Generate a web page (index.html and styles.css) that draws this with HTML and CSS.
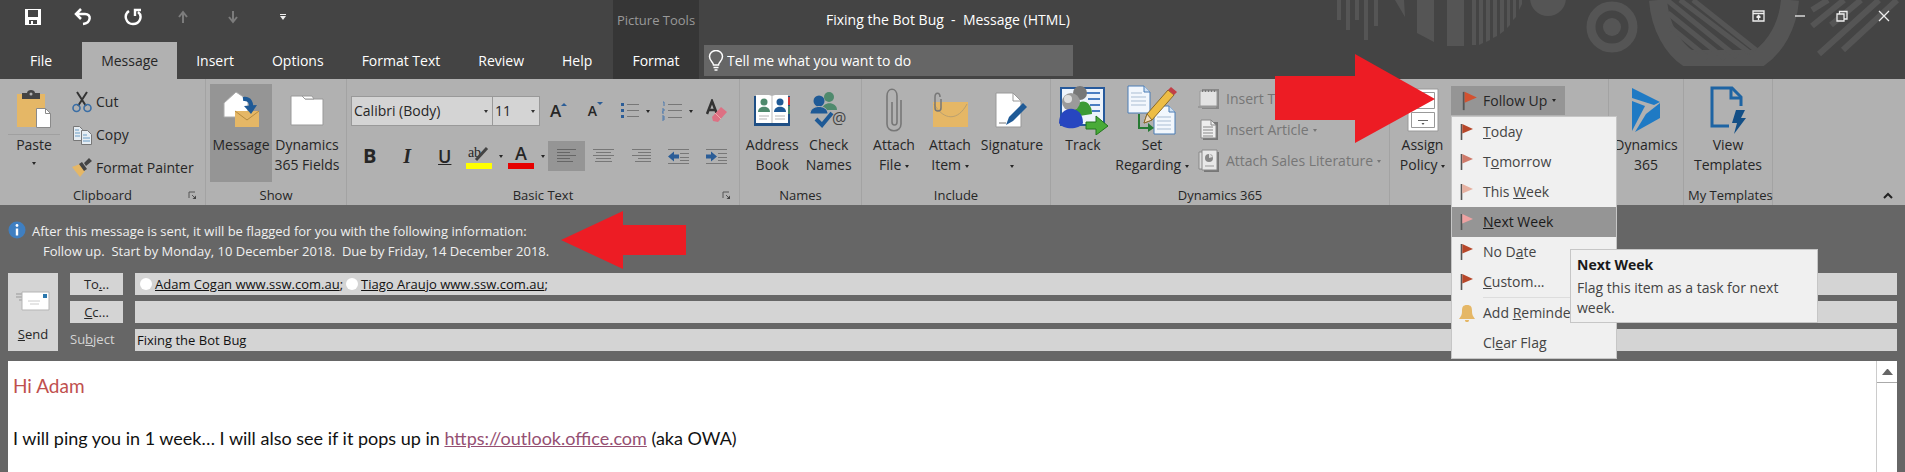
FILE: index.html
```
<!DOCTYPE html>
<html lang="en">
<head>
    <meta charset="UTF-8">
    <meta name="viewport" content="width=device-width, initial-scale=1.0">
    <title>Fixing the Bot Bug - Message (HTML)</title>
    <link rel="stylesheet" href="styles.css">
</head>
<body>
    <svg class="defs" width="0" height="0" aria-hidden="true">
        <symbol id="flag" viewBox="0 0 14 18">
            <path d="M1.5 1v16" stroke="#555" stroke-width="1.6" fill="none"/>
            <path d="M2.3 1L13 6 2.3 10.500z" fill="currentColor"/>
        </symbol>
        <symbol id="launcher" viewBox="0 0 10 10">
            <path d="M1 7V1h6M4 4l3 3" stroke="#555" fill="none"/>
            <path d="M8 4.500V8H4.500z" fill="#444"/>
        </symbol>
    </svg>

    <header class="titlebar">
        <svg class="titlebar-art" width="620" height="66" viewBox="1285 0 620 66" aria-hidden="true">
            <g fill="#555">
                <path d="M1337 0h4v20h-4zM1346 0h4v30h-4zM1355 0h4v20h-4zM1364 0h4v40h-4zM1374 0h4v26h-4z"/>
                <path d="M1395 0h9l1 17zM1417 0h17v42l-17-9zM1447 0h17v46h-17z"/>
                <path d="M1472 0h4v45h-4zM1479 0h4v43l-4 2zM1486 0h4v40l-4 2zM1493 0h4v36l-4 2zM1500 0h4v31l-4 3zM1507 0h3v25l-3 3zM1513 0h3v17l-3 3zM1519 0h3v4l-3 6z"/>
                <circle cx="1548" cy="-2" r="18"/>
                <circle cx="1612" cy="27" r="9"/>
            </g>
            <circle cx="1612" cy="27" r="21" fill="none" stroke="#555" stroke-width="9"/>
            <path d="M1658 0c2 27 15 49 31 59h69c18-12 30-34 32-59" fill="none" stroke="#555" stroke-width="18"/>
            <path d="M1681 58h85v6h-85z" fill="#555"/>
            <path d="M1667 0l70 57M1680 0l70 53M1693 0l63 50M1668 13l57 46M1670 27l38 31" stroke="#555" stroke-width="5"/>
            <path d="M1828 0l-16 10M1844 0l-32 26M1861 0l-30 25M1879 0l-60 54M1897 0l-54 50" stroke="#555" stroke-width="6"/>
        </svg>

        <div class="titlebar-left">
            <div class="quick-access">
                <button type="button" aria-label="Save">
                    <svg width="18" height="18" viewBox="0 0 18 18"><path d="M1 1h16v16H1z" fill="#fff"/><path d="M4 2h10v7H4zM5 12h8v4H5z" fill="#444"/><path d="M7 13h2v3H7z" fill="#fff"/></svg>
                </button>
                <button type="button" aria-label="Undo">
                    <svg width="18" height="18" viewBox="0 0 18 18" fill="none" stroke="#fff" stroke-width="2.500"><path d="M7 1L2 6l5 5M2 6h9c7 0 6 9-2 10"/></svg>
                </button>
                <button type="button" aria-label="Redo">
                    <svg width="18" height="18" viewBox="0 0 18 18" fill="none" stroke="#fff" stroke-width="2.400"><path d="M5 3C-1 7 2 16 9 16s10-8 5-12"/><path d="M11 8V2h6"/></svg>
                </button>
                <button type="button" aria-label="Previous item" disabled>
                    <svg width="12" height="14" viewBox="0 0 12 14" fill="none" stroke="#7c7c7c" stroke-width="2"><path d="M6 13V2M2 7l4-5 4 5"/></svg>
                </button>
                <button type="button" aria-label="Next item" disabled>
                    <svg width="12" height="14" viewBox="0 0 12 14" fill="none" stroke="#7c7c7c" stroke-width="2"><path d="M6 1v11M2 7l4 5 4-5"/></svg>
                </button>
                <button type="button" aria-label="Customize">
                    <svg width="6" height="6" viewBox="0 0 6 6" fill="#eee"><path d="M0 0h6v1H0zM0 2h6L3 6z"/></svg>
                </button>
            </div>
            <nav class="tabs">
                <button type="button" class="tab tab-file">File</button>
                <button type="button" class="tab active">Message</button>
                <button type="button" class="tab">Insert</button>
                <button type="button" class="tab">Options</button>
                <button type="button" class="tab">Format Text</button>
                <button type="button" class="tab">Review</button>
                <button type="button" class="tab">Help</button>
            </nav>
        </div>

        <div class="context-tab">
            <span class="context-name">Picture Tools</span>
            <button type="button" class="tab">Format</button>
        </div>

        <div class="titlebar-right">
            <div class="title-row">
                <h1>Fixing the Bot Bug&nbsp; -&nbsp; Message (HTML)</h1>
                <div class="window-buttons">
                    <button type="button" aria-label="Ribbon display options">
                        <svg width="13" height="12" viewBox="0 0 13 12" fill="none" stroke="#eee" stroke-width="1.300"><path d="M1 1h11v10H1zM1 3.500h11M6.500 10V5.500M4.500 7.500l2-2 2 2"/></svg>
                    </button>
                    <button type="button" aria-label="Minimize">
                        <svg width="12" height="12" viewBox="0 0 12 12" stroke="#eee" stroke-width="1.300"><path d="M1 6h10"/></svg>
                    </button>
                    <button type="button" aria-label="Restore">
                        <svg width="12" height="12" viewBox="0 0 12 12" fill="none" stroke="#eee" stroke-width="1.300"><path d="M1 4h7v7H1zM3.500 4V1.500H11V9H8"/></svg>
                    </button>
                    <button type="button" aria-label="Close">
                        <svg width="12" height="12" viewBox="0 0 12 12" stroke="#eee" stroke-width="1.300"><path d="M1 1l10 10M11 1L1 11"/></svg>
                    </button>
                </div>
            </div>
            <label class="tell-me">
                <svg width="16" height="21" viewBox="0 0 16 21" fill="none" stroke="#fff" stroke-width="1.500"><path d="M5.500 15c0-3-4-4-4-8.500a6.500 6 0 0 1 13 0c0 4.500-4 5.500-4 8.500zM5.500 17.500h5M6.500 20h3"/></svg>
                <input type="text" placeholder="Tell me what you want to do">
            </label>
        </div>
    </header>

    <section class="ribbon">
        <div class="group group-clipboard">
            <div class="group-body">
                <button type="button" class="big paste">
                    <span class="icon">
                        <svg width="36" height="38" viewBox="0 0 36 38"><path d="M1 4h28v33H1z" fill="#e5b766"/><path d="M6 3h5c0-4 8-4 8 0h5v6H6z" fill="#444"/><circle cx="15" cy="4" r="1.500" fill="#b1b1b1"/><path d="M20.500 18.500h9l5 5v14h-14z" fill="#fff" stroke="#8a8a8a"/><path d="M29.500 18.500v5h5" fill="none" stroke="#8a8a8a"/></svg>
                    </span>
                    <span>Paste</span>
                    <span class="caret"></span>
                </button>
                <div class="stack">
                    <button type="button" class="small">
                        <svg width="20" height="22" viewBox="0 0 20 22" fill="none"><path d="M5 1l9 14M15 1L6 15" stroke="#333" stroke-width="2"/><circle cx="4.500" cy="17" r="3.500" stroke="#3a6ea5" stroke-width="1.600"/><circle cx="15.500" cy="17" r="3.500" stroke="#3a6ea5" stroke-width="1.600"/></svg>
                        Cut
                    </button>
                    <button type="button" class="small">
                        <svg width="20" height="22" viewBox="0 0 20 22" fill="#e6edf3" stroke="#777"><path d="M1.500 2.500h6l3 3v11h-9z"/><path d="M9.500 6.500h6l4 4v10h-10z"/><path d="M3 6h4M3 9h5M3 12h5M11 11h4M11 14h7M11 17h7" stroke="#6b9cc4"/></svg>
                        Copy
                    </button>
                    <button type="button" class="small">
                        <svg width="20" height="20" viewBox="0 0 20 20"><path d="M0 9l8-3 5 7-5 6z" fill="#e5b766"/><path d="M7 6l3-2 5 7-3 2zM12 5l5-5 3 3-6 5z" fill="#444"/></svg>
                        Format Painter
                    </button>
                </div>
            </div>
            <div class="group-label">Clipboard <svg class="launcher"><use href="#launcher"/></svg></div>
        </div>

        <div class="group group-show">
            <div class="group-body">
                <button type="button" class="big message-view pressed">
                    <span class="icon">
                        <svg width="36" height="38" viewBox="0 0 36 38"><path d="M1 12L13 1l12 8v17H1z" fill="#fff" stroke="#aaa"/><path d="M12 20h24v16H12z" fill="#e5b766"/><path d="M12 20l12 9 12-9" fill="none" stroke="#b48a40"/><path d="M20 8c7-1 9 4 8 12" fill="none" stroke="#1f5a96" stroke-width="4"/><path d="M21 15l7 8 6-9z" fill="#1f5a96"/></svg>
                    </span>
                    <span>Message</span>
                </button>
                <button type="button" class="big">
                    <span class="icon">
                        <svg width="34" height="32" viewBox="0 0 34 32"><path d="M1 2h11l3 3h18v26H1z" fill="#fff" stroke="#999"/><path d="M12 2h10l2 3h-9z" fill="#fff" stroke="#999"/></svg>
                    </span>
                    <span>Dynamics<br>365 Fields</span>
                </button>
            </div>
            <div class="group-label">Show</div>
        </div>

        <div class="group group-text">
            <div class="group-body rows">
                <div class="row">
                    <span class="combo combo-font"><select aria-label="Font"><option>Calibri (Body)</option></select></span>
                    <span class="combo combo-size"><select aria-label="Font size"><option>11</option></select></span>
                    <button type="button" class="tool" aria-label="Grow font"><span class="grow">A</span><svg width="6" height="18" viewBox="0 0 6 18"><path d="M0 4l3-3 3 3z" fill="#2b5d97"/></svg></button>
                    <button type="button" class="tool" aria-label="Shrink font"><span class="shrink">A</span><svg width="6" height="18" viewBox="0 0 6 18"><path d="M0 0h6L3 3z" fill="#2b5d97"/></svg></button>
                    <button type="button" class="tool wide" aria-label="Bullets">
                        <svg width="18" height="16" viewBox="0 0 18 16"><path d="M0 0h3v3H0zM0 6h3v3H0zM0 12h3v3H0z" fill="#2b5d97"/><path d="M6 1.500h12M6 7.500h12M6 13.500h12" stroke="#777"/></svg><span class="caret"></span>
                    </button>
                    <button type="button" class="tool wide" aria-label="Numbering">
                        <svg width="20" height="20" viewBox="0 0 20 20"><path d="M1 1h1v4M0 8h2v2H0v2h2M0 15h2v4H0M0 17h2" stroke="#4a78ad" fill="none"/><path d="M6 3.500h14M6 9.500h14M6 16.500h14" stroke="#777"/></svg><span class="caret"></span>
                    </button>
                    <button type="button" class="tool" aria-label="Clear formatting"><svg width="22" height="24" viewBox="0 0 22 24"><path d="M1 15L6 2l5 13M3 11h6" fill="none" stroke="#333" stroke-width="2.500"/><path d="M6 18l9-10 6 5-9 10-5-1z" fill="#dd7083"/><path d="M9 14l6 6" stroke="#eaa"/></svg></button>
                </div>
                <div class="row">
                    <button type="button" class="tool bold">B</button>
                    <button type="button" class="tool italic">I</button>
                    <button type="button" class="tool underline">U</button>
                    <button type="button" class="tool wide" aria-label="Highlight">
                        <span class="swatch-tool yellow">ab<svg width="16" height="16" viewBox="0 0 16 16"><path d="M2 14L13 2" stroke="#444" stroke-width="3"/></svg></span><span class="caret"></span>
                    </button>
                    <button type="button" class="tool wide" aria-label="Font color"><span class="swatch-tool red">A</span><span class="caret"></span></button>
                    <button type="button" class="tool pressed" aria-label="Align left"><svg width="19" height="16" viewBox="0 0 19 16"><path d="M0 1.500h19M0 4.500h13M0 7.500h19M0 10.500h13M0 13.500h16" stroke="#666"/></svg></button>
                    <button type="button" class="tool" aria-label="Center"><svg width="21" height="16" viewBox="0 0 21 16"><path d="M0 1.500h21M3 4.500h15M0 7.500h21M3 10.500h15M2 13.500h17" stroke="#777"/></svg></button>
                    <button type="button" class="tool" aria-label="Align right"><svg width="19" height="16" viewBox="0 0 19 16"><path d="M0 1.500h19M6 4.500h13M0 7.500h19M6 10.500h13M3 13.500h16" stroke="#777"/></svg></button>
                    <button type="button" class="tool" aria-label="Decrease indent"><svg width="21" height="17" viewBox="0 0 21 17"><path d="M0 1.500h21M12 5.500h9M12 9.500h9M12 12.500h9M0 15.500h21" stroke="#777"/><path d="M0 8.500l6-5v3h5v4H6v3z" fill="#2b5d97"/></svg></button>
                    <button type="button" class="tool" aria-label="Increase indent"><svg width="21" height="17" viewBox="0 0 21 17"><path d="M0 1.500h21M12 5.500h9M12 9.500h9M12 12.500h9M0 15.500h21" stroke="#777"/><path d="M11 8.500l-6-5v3H0v4h5v3z" fill="#2b5d97"/></svg></button>
                </div>
            </div>
            <div class="group-label">Basic Text <svg class="launcher"><use href="#launcher"/></svg></div>
        </div>

        <div class="group group-names">
            <div class="group-body">
                <button type="button" class="big">
                    <span class="icon">
                        <svg width="38" height="34" viewBox="0 0 38 34"><path d="M1 3h36v30H1z" fill="#1f4f85"/><path d="M35 4h2v8h-2z" fill="#d23b3b"/><path d="M35 13h2v8h-2z" fill="#4f8a6d"/><path d="M3 2h13l3 1 3-1h13v28H3z" fill="#fff"/><path d="M19 3v27" stroke="#bbb"/><path d="M6 23h10M6 26h8M22 23h10M22 26h10" stroke="#b5b5b5"/><circle cx="11" cy="9" r="3.500" fill="#4f8a6d"/><path d="M5 19c0-7 12-7 12 0z" fill="#4f8a6d"/><circle cx="27" cy="9" r="3.500" fill="#1f5a96"/><path d="M21 19c0-7 12-7 12 0z" fill="#1f5a96"/></svg>
                    </span>
                    <span>Address<br>Book</span>
                </button>
                <button type="button" class="big">
                    <span class="icon">
                        <svg width="40" height="42" viewBox="0 0 40 42"><circle cx="20" cy="8" r="5" fill="#4f8a6d"/><path d="M13 21c0-9 15-9 15 0z" fill="#4f8a6d"/><circle cx="10" cy="12" r="5.500" fill="#1f5a96"/><path d="M1 25c0-10 18-10 18 0z" fill="#1f5a96" stroke="#b1b1b1"/><path d="M7 30l6 6 10-12" fill="none" stroke="#1f5a96" stroke-width="4"/><text x="23" y="35" class="at">@</text></svg>
                    </span>
                    <span>Check<br>Names</span>
                </button>
            </div>
            <div class="group-label">Names</div>
        </div>

        <div class="group group-include">
            <div class="group-body">
                <button type="button" class="big">
                    <span class="icon">
                        <svg width="16" height="44" viewBox="0 0 16 44" fill="none" stroke="#777" stroke-width="1.600"><path d="M15 12v24c0 9-14 9-14 0V8c0-9 10-9 10 0v26c0 4-5 4-5 0V14"/></svg>
                    </span>
                    <span>Attach<br>File <i class="caret"></i></span>
                </button>
                <button type="button" class="big">
                    <span class="icon">
                        <svg width="36" height="36" viewBox="0 0 36 36"><path d="M1 10h35v25H1z" fill="#e5b766"/><path d="M2 12c10 17 24 17 33 0" fill="none" stroke="#b9a070"/><path d="M9 7v9c0 4-6 4-6 0V5c0-5 5-5 5 0" fill="none" stroke="#777" stroke-width="1.500"/></svg>
                    </span>
                    <span>Attach<br>Item <i class="caret"></i></span>
                </button>
                <button type="button" class="big signature">
                    <span class="icon">
                        <svg width="34" height="36" viewBox="0 0 34 36"><path d="M1 1h17l8 8v26H1z" fill="#fff" stroke="#999"/><path d="M18 1v8h8" fill="none" stroke="#999"/><path d="M11 33l3-8 14-14 4 4-14 14z" fill="#1f5a96"/><path d="M4 31h7" stroke="#777"/></svg>
                    </span>
                    <span>Signature<br><i class="caret"></i></span>
                </button>
            </div>
            <div class="group-label">Include</div>
        </div>

        <div class="group group-dynamics">
            <div class="group-body">
                <button type="button" class="big">
                    <span class="icon">
                        <svg width="50" height="50" viewBox="0 0 50 50"><path d="M3 3h43v37H3z" fill="#eef4fc" stroke="#26599b" stroke-width="2"/><path d="M28 8h14M30 14h12M32 20h10M34 26h8" stroke="#4b7ec2" stroke-width="2"/><circle cx="22" cy="8" r="7" fill="#777"/><path d="M15 32c0-20 19-20 19-3z" fill="#3c9a35"/><circle cx="13" cy="17" r="9" fill="#9a9a9a"/><circle cx="10" cy="14" r="4" fill="#ddd"/><path d="M1 38c0-19 24-19 24 0-4 7-20 7-24 0z" fill="#2746c0"/><path d="M28 37h10v-6l12 10-12 9v-6H28z" fill="#49ab38" stroke="#23751e"/></svg>
                    </span>
                    <span>Track</span>
                </button>
                <button type="button" class="big regarding">
                    <span class="icon">
                        <svg width="50" height="50" viewBox="0 0 50 50"><path d="M1 1h16l6 6v21H1z" fill="#f2f7fd" stroke="#4a7db5"/><path d="M17 1v6h6" fill="#cfe0f2" stroke="#4a7db5"/><path d="M4 8h11M4 12h15M4 16h15M4 20h15" stroke="#a9bdd3"/><path d="M27 21h15l6 6v22H27z" fill="#f2f7fd" stroke="#4a7db5"/><path d="M42 21v6h6" fill="#cfe0f2" stroke="#4a7db5"/><path d="M30 32h14M30 36h14M30 40h14M30 44h14" stroke="#a9bdd3"/><path d="M12 29v14h10" fill="none" stroke="#267a33" stroke-width="2"/><path d="M21 38l6 5-6 4z" fill="#267a33"/><path d="M17 38l3-9L41 5l6 5-22 25z" fill="#edbd45" stroke="#8a6a2a"/><path d="M41 5l3-3 6 5-3 3z" fill="#c23f47"/><path d="M17 38l3-9 5 6z" fill="#f0dcc0" stroke="#8a6a2a"/></svg>
                    </span>
                    <span>Set<br>Regarding <i class="caret"></i></span>
                </button>
                <div class="stack inserts">
                    <button type="button" class="small" disabled>
                        <svg width="24" height="24" viewBox="0 0 24 24"><path d="M4 2h17v20H4z" fill="#888"/><path d="M2 4h17v15H2z" fill="#e3e3e3" stroke="#999"/><path d="M0 19h18v2H0z" fill="#999"/><path d="M4 4h13" stroke="#777" stroke-width="2" stroke-dasharray="1 2"/></svg>
                        Insert Template
                    </button>
                    <button type="button" class="small" disabled>
                        <svg width="24" height="22" viewBox="0 0 24 22"><path d="M5 3h15v18H5z" fill="#777"/><path d="M3 1h10l5 5v13H3z" fill="#eee" stroke="#888"/><path d="M13 1v5h5M5 8h10M5 11h10M5 14h10M5 17h10" fill="none" stroke="#888"/></svg>
                        Insert Article <i class="caret"></i>
                    </button>
                    <button type="button" class="small" disabled>
                        <svg width="24" height="24" viewBox="0 0 24 24"><path d="M1 3h12v17H1z" fill="#ddd" stroke="#888"/><path d="M6 3h15v20H6z" fill="#777"/><path d="M4 1h15v20H4z" fill="#e8e8e8" stroke="#888"/><circle cx="11" cy="9" r="4" fill="#888"/><path d="M11 9V4l4 4z" fill="#ddd"/><path d="M7 17h9" stroke="#999"/></svg>
                        Attach Sales Literature <i class="caret"></i>
                    </button>
                </div>
            </div>
            <div class="group-label">Dynamics 365</div>
        </div>

        <div class="group group-tags">
            <div class="group-body">
                <button type="button" class="big">
                    <span class="icon">
                        <svg width="32" height="44" viewBox="0 0 32 44" fill="#fff" stroke="#999"><path d="M1 1h30v42H1z"/><path d="M4.500 4.500h23v16h-23zM4.500 24.500h23v15h-23z"/><path d="M11 32.500h10" stroke="#666"/><path d="M14.500 35h3L16 37z" fill="#555" stroke="none"/></svg>
                    </span>
                    <span>Assign<br>Policy <i class="caret"></i></span>
                </button>
                <div class="follow-up">
                    <button type="button" class="follow-up-button" aria-expanded="true">
                        <svg class="flag red-flag"><use href="#flag"/></svg>
                        Follow Up <i class="caret"></i>
                    </button>
                    <div class="menu">
                        <button type="button" class="menu-item"><svg class="flag"><use href="#flag"/></svg><span><u>T</u>oday</span></button>
                        <button type="button" class="menu-item"><svg class="flag mid"><use href="#flag"/></svg><span>T<u>o</u>morrow</span></button>
                        <button type="button" class="menu-item"><svg class="flag pale"><use href="#flag"/></svg><span>This <u>W</u>eek</span></button>
                        <button type="button" class="menu-item selected"><svg class="flag rose"><use href="#flag"/></svg><span><u>N</u>ext Week</span></button>
                        <button type="button" class="menu-item"><svg class="flag"><use href="#flag"/></svg><span>No D<u>a</u>te</span></button>
                        <button type="button" class="menu-item"><svg class="flag"><use href="#flag"/></svg><span><u>C</u>ustom...</span></button>
                        <hr>
                        <button type="button" class="menu-item">
                            <svg width="16" height="17" viewBox="0 0 16 17" fill="#e5b766"><path d="M8 0c4 0 5 2 5 6 0 4 1 5 3 8H0c2-3 3-4 3-8 0-4 1-6 5-6zM6 15h4c0 3-4 3-4 0z"/></svg>
                            <span>Add <u>R</u>eminder...</span>
                        </button>
                        <button type="button" class="menu-item no-icon"><span>Cl<u>e</u>ar Flag</span></button>
                        <div class="tooltip" role="tooltip">
                            <strong>Next Week</strong>
                            <p>Flag this item as a task for next week.</p>
                        </div>
                    </div>
                </div>
            </div>
        </div>

        <div class="group group-365">
            <div class="group-body">
                <button type="button" class="big">
                    <span class="icon">
                        <svg width="30" height="46" viewBox="0 0 30 46" fill="#1f7ac4"><path d="M1 1l28 14-6 3L1 11z"/><path d="M29 16v15L4 45l11-18z"/><path d="M1 14l13 5L1 44z"/></svg>
                    </span>
                    <span>Dynamics<br>365</span>
                </button>
            </div>
        </div>

        <div class="group group-templates">
            <div class="group-body">
                <button type="button" class="big">
                    <span class="icon">
                        <svg width="38" height="50" viewBox="0 0 38 50" fill="none" stroke="#1e64a3" stroke-width="3"><path d="M20 41H3V3h20l9 9v9"/><path d="M22 3v10h10"/><path d="M27 25h9l-4 8h5L25 49l3-11h-5z" fill="#134f86" stroke="none"/></svg>
                    </span>
                    <span>View<br>Templates</span>
                </button>
            </div>
            <div class="group-label">My Templates</div>
        </div>

        <button type="button" class="collapse" aria-label="Collapse the ribbon">
            <svg width="10" height="7" viewBox="0 0 10 7" fill="none" stroke="#222" stroke-width="2"><path d="M1 6l4-4 4 4"/></svg>
        </button>

        <svg class="pointer-right" width="160" height="90" viewBox="0 0 160 90" aria-hidden="true"><path d="M0 22h80V0l80 45-80 44V66H0z" fill="#ed1c24"/></svg>
    </section>

    <main class="compose">
        <div class="info-bar">
            <svg class="info-icon" width="18" height="18" viewBox="0 0 18 18"><circle cx="9" cy="9" r="8.500" fill="#3f7fc1"/><circle cx="9" cy="4.500" r="1.400" fill="#fff"/><path d="M9 7.500v7" stroke="#fff" stroke-width="2.400"/></svg>
            <p>After this message is sent, it will be flagged for you with the following information:<br>
                <span class="detail">Follow up.&nbsp; Start by Monday, 10 December 2018.&nbsp; Due by Friday, 14 December 2018.</span></p>
            <svg class="pointer-left" width="125" height="60" viewBox="0 0 125 60" aria-hidden="true"><path d="M0 30L62 1v14h63v30H62v14z" fill="#ed1c24"/></svg>
        </div>

        <form class="envelope">
            <button type="button" class="send">
                <svg width="34" height="20" viewBox="0 0 34 20"><path d="M0 3h10M0 6h9M3 9h6" stroke="#999"/><path d="M6 1h27v18H6z" fill="#fff" stroke="#b5b5b5"/><path d="M27 3h4v4h-4z" fill="#2b78ae"/><path d="M12 10h12M14 13h9" stroke="#ccc"/></svg>
                <span><u>S</u>end</span>
            </button>
            <button type="button" class="address-button">To<u>.</u>..</button>
            <div class="field recipients">
                <span class="presence"></span><span class="name">Adam Cogan www.ssw.com.au</span>;
                <span class="presence"></span><span class="name">Tiago Araujo www.ssw.com.au</span>;
            </div>
            <button type="button" class="address-button"><u>C</u>c...</button>
            <input type="text" class="field" aria-label="Cc">
            <label for="subject">Su<u>b</u>ject</label>
            <input type="text" class="field" id="subject" value="Fixing the Bot Bug">
        </form>

        <div class="message">
            <article>
                <p class="greeting">Hi Adam</p>
                <p>I will ping you in 1 week… I will also see if it pops up in <a href="https://outlook.office.com">https://outlook.office.com</a> (aka OWA)</p>
            </article>
            <div class="scrollbar">
                <button type="button" aria-label="Scroll up"><svg width="11" height="6" viewBox="0 0 11 6"><path d="M0 6l5-6h1l5 6z" fill="#666"/></svg></button>
            </div>
        </div>
    </main>
</body>
</html>
```
FILE: styles.css
```
* {
    box-sizing: border-box;
}

body {
    margin: 0;
    height: 100vh;
    display: flex;
    flex-direction: column;
    overflow: hidden;
    background-color: #666;
    color: #262626;
    font-family: "Open Sans", "Noto Sans", sans-serif;
    font-size: 14px;
    line-height: 20px;
}

button, input, select {
    font: inherit;
    color: inherit;
    border: none;
    border-radius: 0;
    background: none;
    padding: 0;
    margin: 0;
}

svg {
    flex: none;
}

p, h1 {
    margin: 0;
}

.defs {
    position: absolute;
}

.caret {
    display: inline-block;
    border: 2px solid transparent;
    border-top: 3px solid currentColor;
    border-bottom: none;
    vertical-align: middle;
}

/* title bar */
.titlebar {
    position: relative;
    display: flex;
    height: 79px;
    background-color: #444;
    color: #fff;
}

.titlebar-art {
    position: absolute;
    top: 0;
    right: 0;
}

.titlebar-left {
    width: 613px;
}

.quick-access {
    display: flex;
    height: 42px;
    padding: 0 0 8px 8px;
}

.quick-access button {
    width: 50px;
    display: flex;
    align-items: center;
    justify-content: center;
}

.tabs {
    display: flex;
}

.tab {
    height: 37px;
    padding: 0 19px;
    color: #fff;
}

.tab-file {
    padding: 0 30px;
}

.tab.active {
    background-color: #b1b1b1;
    color: #262626;
}

.context-tab {
    width: 86px;
    display: flex;
    flex-direction: column;
    align-items: center;
    background-color: #363636;
}

.context-name {
    height: 42px;
    padding-top: 10px;
    font-size: 13px;
    color: #999;
    white-space: nowrap;
}

.titlebar-right {
    position: relative;
    flex: 1;
}

.title-row {
    display: flex;
    justify-content: space-between;
    height: 45px;
    padding-left: 127px;
}

.title-row h1 {
    padding-top: 10px;
    font-size: 14px;
    font-weight: normal;
}

.window-buttons {
    display: flex;
    height: 31px;
}

.window-buttons button {
    width: 42px;
    display: flex;
    align-items: center;
    justify-content: center;
}

.tell-me {
    display: flex;
    align-items: center;
    gap: 3px;
    width: 369px;
    height: 31px;
    margin-left: 5px;
    padding-left: 4px;
    background-color: #666;
}

.tell-me input {
    flex: 1;
    outline: none;
}

.tell-me input::placeholder {
    color: #fff;
    opacity: 1;
}

/* ribbon */
.ribbon {
    position: relative;
    z-index: 1;
    display: flex;
    height: 126px;
    background-color: #b1b1b1;
}

.group {
    display: flex;
    flex-direction: column;
    flex: none;
    padding: 5px 4px 0;
    border-right: 1px solid #a3a3a3;
}

.group-clipboard { width: 206px; }
.group-show { width: 141px; }
.group-text { width: 393px; }
.group-names { width: 122px; }
.group-include { width: 189px; }
.group-dynamics { width: 339px; }
.group-tags { width: 219px; }
.group-365 { width: 75px; }
.group-templates { width: 89px; }

.group-body {
    display: flex;
    height: 98px;
}

.group-label {
    position: relative;
    padding-top: 4px;
    font-size: 13px;
    line-height: 18px;
    text-align: center;
    white-space: nowrap;
}

.launcher {
    position: absolute;
    right: 3px;
    bottom: 3px;
    width: 10px;
    height: 10px;
}

.big {
    display: flex;
    flex-direction: column;
    align-items: center;
    flex: 1;
    min-width: 0;
    white-space: nowrap;
}

.icon {
    display: flex;
    align-items: center;
    justify-content: center;
    height: 51px;
    flex: none;
}

.pressed {
    background-color: #959595;
}

.big.paste {
    flex: none;
    width: 60px;
}

.paste .icon {
    width: 52px;
    border-bottom: 1px solid #a0a0a0;
}

.paste .caret {
    margin-top: 7px;
}

.big.message-view {
    flex: none;
    width: 62px;
}

.stack {
    display: flex;
    flex-direction: column;
    justify-content: space-between;
    padding: 6px 0 2px 8px;
}

.small {
    display: flex;
    align-items: center;
    gap: 4px;
    height: 24px;
    white-space: nowrap;
}

.small:disabled {
    color: #767676;
}

.group-include .big {
    flex: none;
    width: 56px;
}

.group-include .signature {
    width: 68px;
}

.group-dynamics .big {
    flex: none;
    width: 56px;
}

.group-dynamics .regarding {
    width: 82px;
}

.inserts {
    padding: 3px 0 9px 5px;
}

.at {
    font-size: 16px;
    fill: #444;
}

/* basic text tools */
.rows {
    flex-direction: column;
    padding: 12px 0 11px;
    justify-content: space-between;
}

.row {
    display: flex;
    height: 30px;
}

.combo {
    position: relative;
    display: flex;
    border: 1px solid #999;
    background-color: #d4d4d4;
}

.combo::after {
    content: "";
    position: absolute;
    top: 13px;
    right: 4px;
    border: 2px solid transparent;
    border-top: 3px solid #333;
    border-bottom: none;
}

.combo select {
    flex: 1;
    appearance: none;
    padding-left: 2px;
}

.combo-font {
    width: 142px;
}

.combo-size {
    width: 47px;
    border-left: none;
}

.tool {
    display: flex;
    align-items: center;
    justify-content: center;
    flex: 1;
}

.tool.wide {
    flex: none;
    width: 42px;
    gap: 7px;
}

.grow {
    font-size: 17px;
    font-weight: 600;
}

.shrink {
    font-size: 14px;
    font-weight: 600;
}

.bold {
    font-size: 20px;
    font-weight: bold;
}

.italic {
    font-family: "Liberation Serif", serif;
    font-size: 20px;
    font-style: italic;
    font-weight: bold;
}

.underline {
    font-size: 18px;
    font-weight: 600;
    text-decoration: underline;
    text-decoration-thickness: 1px;
}

.swatch-tool {
    display: flex;
    justify-content: center;
    width: 26px;
    height: 26px;
    border-bottom: 6px solid;
}

.swatch-tool.yellow {
    border-color: #ff0;
    font-family: "Liberation Serif", serif;
}

.swatch-tool.yellow svg {
    margin: 3px 0 0 -7px;
}

.swatch-tool.red {
    border-color: #e60000;
    font-size: 18px;
    font-weight: 600;
}

/* follow up menu */
.group-tags .big {
    flex: none;
    width: 57px;
}

.follow-up {
    position: relative;
    padding-top: 2px;
}

.follow-up-button {
    display: flex;
    align-items: center;
    gap: 5px;
    width: 114px;
    height: 29px;
    padding-left: 11px;
    background-color: #959595;
    white-space: nowrap;
}

.flag {
    width: 16px;
    height: 18px;
    color: #b7472a;
}

.flag.red-flag {
    height: 22px;
    color: #d35230;
}

.flag.mid { color: #cf7a6a; }
.flag.pale { color: #e6b0a0; }
.flag.rose { color: #eea2a2; }

.menu {
    position: absolute;
    top: 32px;
    left: 0;
    width: 166px;
    border: 1px solid #c6c6c6;
    background-color: #f0f0f0;
    color: #444;
}

.menu-item {
    display: flex;
    align-items: center;
    gap: 8px;
    width: 100%;
    height: 30px;
    padding-left: 7px;
    white-space: nowrap;
}

.menu-item.no-icon {
    padding-left: 31px;
}

.menu-item.selected {
    background-color: #959595;
    color: #1a1a1a;
}

.menu hr {
    height: 1px;
    margin: 0 0 0 31px;
    border: none;
    background-color: #ddd;
}

.tooltip {
    position: absolute;
    top: 132px;
    left: 118px;
    width: 248px;
    padding: 5px 6px 4px;
    border: 1px solid #c6c6c6;
    background-color: #f0f0f0;
    color: #444;
}

.tooltip strong {
    color: #1a1a1a;
}

.tooltip p {
    margin-top: 3px;
}

.collapse {
    margin-left: auto;
    align-self: flex-end;
    height: 22px;
    padding: 0 12px;
}

.pointer-right {
    position: absolute;
    top: -25px;
    left: 1275px;
}

/* compose area */
.compose {
    flex: 1;
    display: flex;
    flex-direction: column;
    padding: 0 8px;
}

.info-bar {
    display: flex;
    align-items: flex-start;
    height: 68px;
    padding-top: 16px;
    color: #f0f0f0;
    font-size: 13px;
}

.info-icon {
    margin-right: 6px;
}

.detail {
    padding-left: 11px;
}

.pointer-left {
    margin: -11px 0 0 12px;
}

.envelope {
    display: grid;
    grid-template-columns: 50px 53px 1fr;
    grid-auto-rows: 22px;
    gap: 6px 12px;
    font-size: 13px;
}

.send {
    grid-row: span 3;
    display: flex;
    flex-direction: column;
    align-items: center;
    justify-content: space-between;
    padding: 18px 0 7px;
    background-color: #d4d4d4;
}

.address-button {
    background-color: #d4d4d4;
}

.envelope label {
    color: #d4d4d4;
}

.field {
    width: 100%;
    padding: 0 2px;
    background-color: #d4d4d4;
    color: #111;
}

.recipients {
    display: flex;
    align-items: center;
}

.presence {
    width: 12px;
    height: 12px;
    margin: 0 3px;
    border-radius: 50%;
    background-color: #fff;
}

.name {
    text-decoration: underline;
}

.message {
    display: flex;
    flex: 1;
    margin-top: 10px;
    background-color: #fff;
    color: #111;
    font-family: Lato, sans-serif;
    font-size: 18px;
    line-height: 26px;
}

article {
    flex: 1;
    padding: 12px 5px;
}

.greeting {
    margin-bottom: 26px;
    color: #c0504d;
    font-size: 19px;
}

article a {
    color: #954f72;
}

.scrollbar {
    width: 21px;
    border-left: 1px solid #ccc;
}

.scrollbar button {
    display: flex;
    align-items: center;
    justify-content: center;
    width: 100%;
    height: 22px;
    border-bottom: 1px solid #aaa;
}
```
